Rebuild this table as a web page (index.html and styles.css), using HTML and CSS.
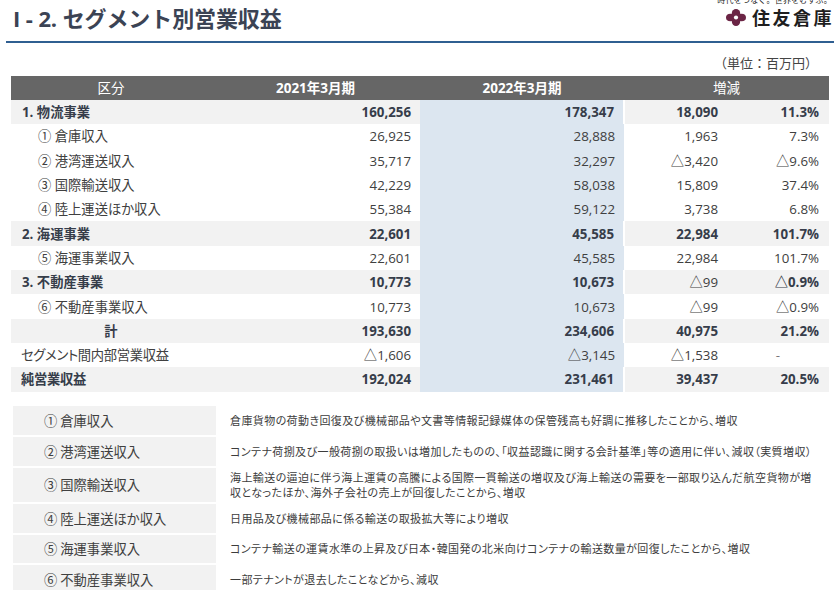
FILE: index.html
```html
<!DOCTYPE html>
<html lang="ja">
<head>
<meta charset="utf-8">
<title>セグメント別営業収益</title>
<link rel="stylesheet" href="styles.css">
</head>
<body>
<header class="top">
  <h1 class="title">I - 2. セグメント別営業収益</h1>
  <div class="brand">
    <div class="tagline">時代をつなぐ。世界をむすぶ。</div>
    <div class="logo">
      <svg class="mark" viewBox="0 0 20 17" width="20" height="17" aria-hidden="true">
        <circle cx="10" cy="4.2" r="4.2" fill="#6b2545"/>
        <circle cx="10" cy="12.8" r="4.2" fill="#6b2545"/>
        <ellipse cx="4.4" cy="8.5" rx="4.4" ry="3.8" fill="#6b2545"/>
        <ellipse cx="15.6" cy="8.5" rx="4.4" ry="3.8" fill="#6b2545"/>
        <polygon points="10,2 17,8.5 10,15 3,8.5" fill="#6b2545"/>
        <circle cx="10" cy="8.5" r="2.1" fill="#fff"/>
      </svg>
      <span class="logo-text">住友倉庫</span>
    </div>
  </div>
</header>
<div class="rule"></div>
<div class="unit">（単位：百万円）</div>

<table class="seg">
  <colgroup>
    <col class="c-label"><col class="c-y21"><col class="c-y22"><col class="c-diff"><col class="c-pct">
  </colgroup>
  <thead>
    <tr>
      <th class="h-normal">区分</th>
      <th>2021年3月期</th>
      <th>2022年3月期</th>
      <th class="h-normal" colspan="2">増減</th>
    </tr>
  </thead>
  <tbody>
    <tr class="total">
      <td class="lbl">1. 物流事業</td><td>160,256</td><td class="y22">178,347</td><td class="d">18,090</td><td class="p">11.3%</td>
    </tr>
    <tr>
      <td class="lbl sub">① 倉庫収入</td><td>26,925</td><td class="y22">28,888</td><td class="d">1,963</td><td class="p">7.3%</td>
    </tr>
    <tr>
      <td class="lbl sub">② 港湾運送収入</td><td>35,717</td><td class="y22">32,297</td><td class="d">△3,420</td><td class="p">△9.6%</td>
    </tr>
    <tr>
      <td class="lbl sub">③ 国際輸送収入</td><td>42,229</td><td class="y22">58,038</td><td class="d">15,809</td><td class="p">37.4%</td>
    </tr>
    <tr>
      <td class="lbl sub">④ 陸上運送ほか収入</td><td>55,384</td><td class="y22">59,122</td><td class="d">3,738</td><td class="p">6.8%</td>
    </tr>
    <tr class="total">
      <td class="lbl">2. 海運事業</td><td>22,601</td><td class="y22">45,585</td><td class="d">22,984</td><td class="p">101.7%</td>
    </tr>
    <tr>
      <td class="lbl sub">⑤ 海運事業収入</td><td>22,601</td><td class="y22">45,585</td><td class="d">22,984</td><td class="p">101.7%</td>
    </tr>
    <tr class="total">
      <td class="lbl">3. 不動産事業</td><td>10,773</td><td class="y22">10,673</td><td class="d thin">△99</td><td class="p">△0.9%</td>
    </tr>
    <tr>
      <td class="lbl sub">⑥ 不動産事業収入</td><td>10,773</td><td class="y22">10,673</td><td class="d">△99</td><td class="p">△0.9%</td>
    </tr>
    <tr class="total">
      <td class="lbl center">計</td><td>193,630</td><td class="y22">234,606</td><td class="d">40,975</td><td class="p">21.2%</td>
    </tr>
    <tr>
      <td class="lbl plain">セグメント間内部営業収益</td><td>△1,606</td><td class="y22">△3,145</td><td class="d">△1,538</td><td class="p dash">-</td>
    </tr>
    <tr class="total">
      <td class="lbl plain">純営業収益</td><td>192,024</td><td class="y22">231,461</td><td class="d">39,437</td><td class="p">20.5%</td>
    </tr>
  </tbody>
</table>

<div class="notes">
  <div class="note">
    <div class="note-label">① 倉庫収入</div>
    <div class="note-text">倉庫貨物の荷動き回復及び機械部品や文書等情報記録媒体の保管残高も好調に推移したことから、増収</div>
  </div>
  <div class="note">
    <div class="note-label">② 港湾運送収入</div>
    <div class="note-text">コンテナ荷捌及び一般荷捌の取扱いは増加したものの、「収益認識に関する会計基準」等の適用に伴い、減収（実質増収）</div>
  </div>
  <div class="note tall">
    <div class="note-label">③ 国際輸送収入</div>
    <div class="note-text">海上輸送の逼迫に伴う海上運賃の高騰による国際一貫輸送の増収及び海上輸送の需要を一部取り込んだ航空貨物が増<br>収となったほか、海外子会社の売上が回復したことから、増収</div>
  </div>
  <div class="note">
    <div class="note-label">④ 陸上運送ほか収入</div>
    <div class="note-text">日用品及び機械部品に係る輸送の取扱拡大等により増収</div>
  </div>
  <div class="note short">
    <div class="note-label">⑤ 海運事業収入</div>
    <div class="note-text">コンテナ輸送の運賃水準の上昇及び日本・韓国発の北米向けコンテナの輸送数量が回復したことから、増収</div>
  </div>
  <div class="note">
    <div class="note-label">⑥ 不動産事業収入</div>
    <div class="note-text">一部テナントが退去したことなどから、減収</div>
  </div>
</div>
</body>
</html>
```

FILE: styles.css
```css
* { box-sizing: border-box; }

html, body {
  margin: 0;
  padding: 0;
  background: #ffffff;
}

body {
  width: 836px;
  height: 590px;
  overflow: hidden;
  font-family: "Open Sans", "Noto Sans CJK JP", sans-serif;
  color: #404040;
}

/* ---------- header ---------- */
.top {
  display: flex;
  justify-content: space-between;
  align-items: flex-start;
  height: 41px;
  padding: 0 4px 0 13px;
}

.title {
  margin: 4px 0 0;
  font-family: "Open Sans", "Noto Sans CJK JP", sans-serif;
  font-size: 22px;
  line-height: 28px;
  font-weight: 700;
  color: #3b4354;
  letter-spacing: -0.1px;
}

.brand {
  display: flex;
  flex-direction: column;
  align-items: flex-end;
}

.tagline {
  margin-top: -5px;
  font-family: "Noto Sans CJK JP", sans-serif;
  font-size: 8px;
  line-height: 10px;
  color: #222;
  letter-spacing: 0.2px;
}

.logo {
  display: flex;
  align-items: center;
  gap: 6px;
  margin-top: 2px;
}

.mark {
  display: block;
}

.logo-text {
  font-family: "Noto Sans CJK JP", sans-serif;
  font-size: 18px;
  line-height: 20px;
  font-weight: 700;
  letter-spacing: 2.5px;
  color: #1e1e1e;
  margin-right: -2px;
}

.rule {
  height: 2px;
  margin: 0 2px 0 6px;
  background: #2f5f91;
}

.unit {
  margin-top: 12px;
  padding-right: 18px;
  text-align: right;
  font-family: "Noto Sans CJK JP", sans-serif;
  font-size: 13px;
  line-height: 16px;
  color: #444;
}

/* ---------- main table ---------- */
.seg {
  margin: 5px 0 0 11px;
  width: 818px;
  border-collapse: collapse;
  table-layout: fixed;
  font-size: 13.3px;
}

.c-label { width: 200px; }
.c-y21 { width: 209px; }
.c-y22 { width: 204px; }
.c-diff { width: 103px; }
.c-pct { width: 102px; }

.seg thead th {
  height: 24px;
  padding: 0;
  background: #666666;
  color: #ffffff;
  font-weight: 700;
  text-align: center;
  font-size: 13.5px;
  line-height: 24px;
}

.seg thead th.h-normal {
  font-weight: 400;
}

.seg tbody tr {
  height: 24.3px;
}

.seg td {
  padding: 0 9px 0 0;
  text-align: right;
  line-height: 18px;
  white-space: nowrap;
  color: #404040;
}

.seg td.p {
  padding-right: 10px;
}

.seg td.lbl {
  text-align: left;
  padding: 0 0 0 11px;
  font-feature-settings: "palt";
}

.seg td.lbl.sub {
  padding-left: 27px;
}

.seg td.lbl.plain {
  padding-left: 10px;
  letter-spacing: -0.3px;
}

.seg td.lbl.center {
  text-align: center;
  padding: 0;
}

.seg td.y22 {
  background: #dce6f0;
}

.seg tr.total td {
  background: #f2f2f2;
  font-weight: 700;
  color: #363d4a;
}

.seg tr.total td.y22 {
  background: #dce6f0;
}

.seg tr.total td.d {
  border-left: 2px solid #ffffff;
}

.seg tr.total td.thin {
  font-weight: 400;
  color: #404040;
}

.seg td.dash {
  text-align: center;
  padding: 0;
  color: #777;
}

/* ---------- notes ---------- */
.notes {
  margin: 14px 0 0 13px;
  display: flex;
  flex-direction: column;
  gap: 2px;
}

.note {
  display: flex;
  align-items: center;
  height: 29px;
}

.note.short {
  height: 28px;
}

.note.tall {
  height: 34px;
}

.note-label {
  flex: 0 0 203px;
  align-self: stretch;
  display: flex;
  align-items: center;
  padding-left: 31px;
  background: #f2f2f2;
  font-family: "Noto Sans CJK JP", sans-serif;
  font-size: 13.3px;
  color: #404040;
  font-feature-settings: "palt";
  white-space: pre;
}

.note-text {
  margin-left: 14px;
  font-family: "Noto Sans CJK JP", sans-serif;
  font-size: 11px;
  line-height: 15px;
  color: #3c3c3c;
  white-space: nowrap;
  font-feature-settings: "palt";
  letter-spacing: 0.4px;
}
```
